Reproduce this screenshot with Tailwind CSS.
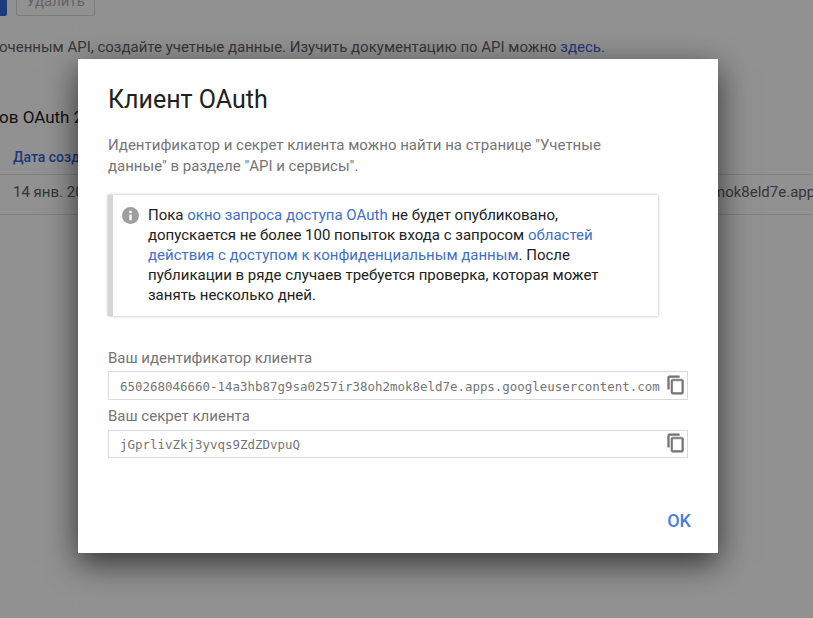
<!DOCTYPE html>
<html lang="ru">
<head>
<meta charset="UTF-8">
<title>Клиент OAuth</title>
<script src="https://cdn.jsdelivr.net/npm/@tailwindcss/browser@4"></script>
</head>
<body class="relative w-[813px] h-[618px] overflow-hidden bg-white font-['Roboto',sans-serif]">
    <!-- page behind the dialog -->
    <div class="h-[618px] overflow-hidden">
        <div class="flex gap-[9px] -mt-[13px] h-[29px]">
            <div class="w-[7px] h-[29px] bg-[#3367d6] rounded-r-[2px]"></div>
            <div class="w-[79px] h-[29px] border border-[#dadada] rounded-[2px] text-[15px] leading-[27px] text-center text-[#b0b0b0]">Удалить</div>
        </div>
        <p class="mt-[19px] -ml-[1px] text-[15px] leading-[24px] text-[#616161] whitespace-nowrap">оченным API, создайте учетные данные. Изучить документацию по API можно <span class="text-[#3367d6]">здесь</span>.</p>
        <h2 class="mt-[46px] -ml-[1px] text-[17px] leading-[24px] text-[#212121] whitespace-nowrap">ов OAuth 2.0</h2>
        <div class="mt-[9px] h-[37px] pl-[13px] border-b border-[#e0e0e0] text-[14px] font-medium leading-[38px] text-[#3367d6]">Дата создания</div>
        <div class="relative h-[40px] pl-[13px] border-b border-[#e0e0e0] text-[15px] leading-[35px] text-[#616161]">
            14 янв. 2019
            <span class="absolute left-[712px] top-0 whitespace-nowrap">mok8eld7e.apps.googleusercontent.com</span>
        </div>
    </div>

    <div class="absolute inset-0 bg-black/43"></div>

    <!-- dialog -->
    <div class="absolute left-[78px] top-[59px] w-[640px] h-[494px] bg-white px-[30px] shadow-[0_10px_30px_rgba(0,0,0,0.65)]">
        <h1 class="pt-[25px] text-[25px] leading-[32px] text-[#212121]">Клиент OAuth</h1>
        <p class="mt-[19px] w-[520px] text-[15px] leading-[21px] text-[#757575]">Идентификатор и секрет клиента можно найти на странице "Учетные данные" в разделе "API и сервисы".</p>

        <div class="flex mt-[18px] w-[550px] h-[121px] pt-[10px] pl-[9px] pr-[16px] border-l-[5px] border-[#d5d5d5] shadow-[0_0_3px_rgba(0,0,0,0.3)]">
            <svg class="w-[17px] h-[17px] mt-[2px] shrink-0" viewBox="0 0 18 18"><circle cx="9" cy="9" r="9" fill="#9e9e9e"/><rect x="7.750" y="8" width="2.500" height="6" fill="#fff"/><rect x="7.750" y="4" width="2.500" height="2.500" fill="#fff"/></svg>
            <p class="ml-[9px] w-[458px] text-[15px] leading-[20px] text-[#212121]">Пока <a class="text-[#3f6fc6]">окно запроса доступа OAuth</a> не будет опубликовано, допускается не более 100 попыток входа с запросом <a class="text-[#3f6fc6]">областей действия с доступом к конфиденциальным данным</a>. После публикации в ряде случаев требуется проверка, которая может занять несколько дней.</p>
        </div>

        <div class="mt-[32px] text-[15px] leading-[20px] text-[#757575]">Ваш идентификатор клиента</div>
        <div class="flex items-center justify-between mt-[3px] h-[29px] pl-[11px] pr-[1px] border border-[#dadada] font-['DejaVu_Sans_Mono',monospace] text-[12.46px] text-[#757575]">
            <span class="pt-[4px] whitespace-nowrap">650268046660-14a3hb87g9sa0257ir38oh2mok8eld7e.apps.googleusercontent.com</span>
            <svg class="w-[20px] h-[20px] -mt-[2px] shrink-0" viewBox="0 0 24 24" fill="#757575" stroke="#757575" stroke-width="0.7"><path d="M16 1H4c-1.100 0-2 .9-2 2v14h2V3h12V1zm3 4H8c-1.100 0-2 .9-2 2v14c0 1.100.9 2 2 2h11c1.100 0 2-.9 2-2V7c0-1.100-.9-2-2-2zm0 16H8V7h11v14z"/></svg>
        </div>
        <div class="mt-[6px] text-[15px] leading-[20px] text-[#757575]">Ваш секрет клиента</div>
        <div class="flex items-center justify-between mt-[4px] h-[28px] pl-[11px] pr-[1px] border border-[#dadada] font-['DejaVu_Sans_Mono',monospace] text-[12.46px] text-[#757575]">
            <span class="pt-[3px] whitespace-nowrap">jGprlivZkj3yvqs9ZdZDvpuQ</span>
            <svg class="w-[20px] h-[20px] -mt-[2px] shrink-0" viewBox="0 0 24 24" fill="#757575" stroke="#757575" stroke-width="0.7"><path d="M16 1H4c-1.100 0-2 .9-2 2v14h2V3h12V1zm3 4H8c-1.100 0-2 .9-2 2v14c0 1.100.9 2 2 2h11c1.100 0 2-.9 2-2V7c0-1.100-.9-2-2-2zm0 16H8V7h11v14z"/></svg>
        </div>

        <button class="absolute right-[27px] bottom-[22px] text-[18px] leading-[20px] font-medium text-[#4a7fdc]">OK</button>
    </div>
</body>
</html>
